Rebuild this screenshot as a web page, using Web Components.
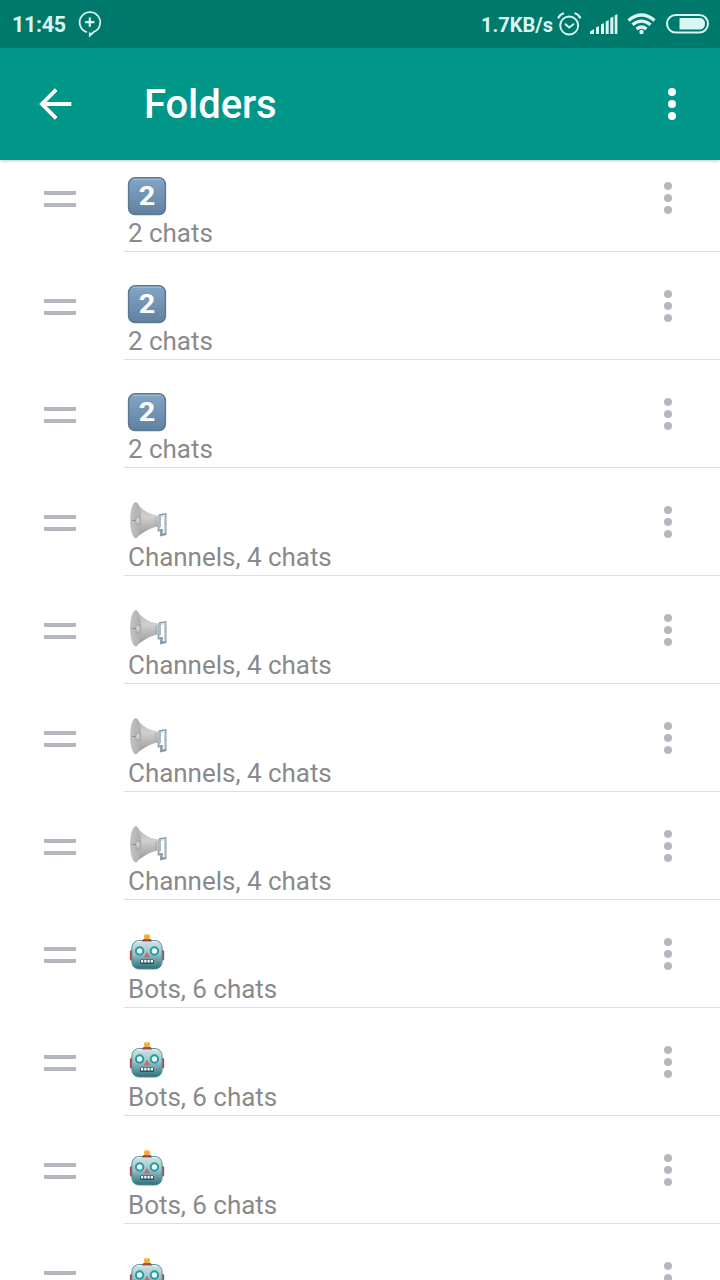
<!DOCTYPE html>
<html lang="en">
<head>
<meta charset="utf-8">
<title>Folders</title>
<style>
  body {
    margin: 0;
    width: 720px;
    height: 1280px;
    overflow: hidden;
    background: #fff;
    font-family: Roboto, "Noto Sans", sans-serif;
  }
</style>
</head>
<body>
<folders-screen></folders-screen>

<script>
// Emoji artwork, all on a 40x40 box
const EMOJI = {
  two: `
    <defs>
      <linearGradient id="key" x1="0" y1="0" x2="0" y2="1">
        <stop offset="0" stop-color="#84a6c6"/>
        <stop offset="1" stop-color="#6080a0"/>
      </linearGradient>
    </defs>
    <rect x="1.6" y="1.8" width="36.8" height="36.8" rx="6.5" fill="url(#key)" stroke="#5c7892" stroke-width="1.5"/>
    <path d="M6 3.300h28" stroke="#a5c0d8" stroke-width="1" stroke-linecap="round"/>
    <text x="20" y="29" text-anchor="middle" font-family="Roboto, sans-serif" font-size="25.5" font-weight="700" textLength="16.5" lengthAdjust="spacingAndGlyphs" fill="#fff">2</text>`,
  horn: `
    <defs>
      <linearGradient id="cone" x1="0" y1="0" x2="0" y2="1">
        <stop offset="0" stop-color="#b5b5b5"/>
        <stop offset=".4" stop-color="#d0d0d0"/>
        <stop offset="1" stop-color="#929292"/>
      </linearGradient>
      <linearGradient id="bell" x1="0" y1="0" x2="1" y2="0">
        <stop offset="0" stop-color="#c2c2c2"/>
        <stop offset="1" stop-color="#adadad"/>
      </linearGradient>
    </defs>
    <path d="M32 15.500l6.300-1v19.500l-4 1v-6" fill="none" stroke="#8799a6" stroke-width="2.400"/>
    <path d="M33 16l4.800-.8v18" fill="none" stroke="#d3e0ea" stroke-width="1.200"/>
    <path d="M8 2.500C14 7 19 14.500 32 15.500v11C22 27.500 16 33 8.500 38z" fill="url(#cone)"/>
    <ellipse cx="8.800" cy="20.200" rx="5.200" ry="17.800" fill="url(#bell)" stroke="#b2b2b2" stroke-width=".7"/>
    <path d="M5 20.500h8" stroke="#8c8c8c" stroke-width="1"/>
    <ellipse cx="11" cy="20.500" rx="2.400" ry="4" fill="#cecece" stroke="#949494" stroke-width=".8"/>
    <path d="M29 17v9.500" stroke="#a4a7a9" stroke-width="1"/>
    <path d="M31 15.500l3-.5v12l-3 1z" fill="#aebbc5"/>
    <path d="M31.500 26.500v4h4.500" fill="none" stroke="#8fa2af" stroke-width="1.800"/>`,
  robot: `
    <defs>
      <linearGradient id="face" x1="0" y1="0" x2="0" y2="1">
        <stop offset="0" stop-color="#d0e6e5"/>
        <stop offset=".45" stop-color="#9cc5c9"/>
        <stop offset="1" stop-color="#2b707c"/>
      </linearGradient>
    </defs>
    <rect x="2.800" y="18" width="4.500" height="10.500" rx="1.500" fill="#b04c58"/>
    <rect x="32.700" y="18" width="4.500" height="10.500" rx="1.500" fill="#b04c58"/>
    <rect x="4.900" y="8.500" width="30.200" height="28.500" rx="7" fill="url(#face)" stroke="#4d8890" stroke-width=".9"/>
    <path d="M10 9.700h20" stroke="#eef8f7" stroke-width="1"/>
    <path d="M15 9.600q0-3.200 5-3.200t5 3.200z" fill="#a04652"/>
    <rect x="17" y="1.900" width="6" height="5.400" rx="2.400" fill="#eeac2b"/>
    <path d="M18.800 3h2.400" stroke="#ffe186"/>
    <circle cx="12.600" cy="19" r="3.700" fill="#effcfc" stroke="#2699a5" stroke-width="2"/>
    <circle cx="27.400" cy="19" r="3.700" fill="#effcfc" stroke="#2699a5" stroke-width="2"/>
    <path d="M20 19.500l3.200 6h-6.400z" fill="#c56a77"/>
    <rect x="13" y="27.500" width="14" height="4.600" rx="1.500" fill="#245461"/>
    <path d="M14 29.300h12" stroke="#fff" stroke-width="2.400" stroke-dasharray="2.250 1"/>`
};

const FOLDERS = [
  ["two", "2 chats"],
  ["two", "2 chats"],
  ["two", "2 chats"],
  ["horn", "Channels, 4 chats"],
  ["horn", "Channels, 4 chats"],
  ["horn", "Channels, 4 chats"],
  ["horn", "Channels, 4 chats"],
  ["robot", "Bots, 6 chats"],
  ["robot", "Bots, 6 chats"],
  ["robot", "Bots, 6 chats"],
  ["robot", ""]
];

class FolderEmoji extends HTMLElement {
  connectedCallback() {
    this.attachShadow({ mode: "open" }).innerHTML = `
      <style>
        :host { display: block; width: 40px; height: 40px; }
        svg { display: block; }
      </style>
      <svg width="40" height="40" viewBox="0 0 40 40">${EMOJI[this.getAttribute("name")]}</svg>
    `;
  }
}
customElements.define("folder-emoji", FolderEmoji);

// Three vertical dots, coloured by the parent
class MoreDots extends HTMLElement {
  connectedCallback() {
    this.attachShadow({ mode: "open" }).innerHTML = `
      <style>
        :host { display: flex; flex-direction: column; gap: 4px; width: 8px; }
        i { height: 8px; border-radius: 50%; background: currentColor; }
      </style>
      <i></i><i></i><i></i>
    `;
  }
}
customElements.define("more-dots", MoreDots);

class StatusBar extends HTMLElement {
  connectedCallback() {
    this.attachShadow({ mode: "open" }).innerHTML = `
      <style>
        :host {
          display: flex;
          align-items: center;
          height: 48px;
          box-sizing: border-box;
          padding: 0 11px 0 12px;
          background: #00796d;
          color: #d9f6f2;
          font-size: 21.5px;
          font-weight: 700;
        }
        svg { display: block; flex: none; }
        span { padding-top: 1px; }
        .time { width: 65px; letter-spacing: -.35px; }
        .rate { margin-left: auto; font-size: 20px; width: 76px; white-space: nowrap; }
      </style>
      <span class="time">11:45</span>
      <svg width="26" height="28" viewBox="0 0 26 28" fill="none" stroke="#d9f6f2">
        <path d="M10 22.200A10.300 10.300 0 1 1 17 21.800L12.800 25.500V22.500" stroke-width="1.700"/>
        <path d="M12.800 7.500v9.200M8.200 12.100h9.200" stroke-width="2.200"/>
      </svg>
      <span class="rate">1.7KB/s</span>
      <svg width="152" height="28" viewBox="0 0 152 28" fill="none" stroke="#d9f6f2">
        <g stroke-width="1.900" stroke-linecap="round">
          <circle cx="12.200" cy="15.500" r="9"/>
          <path d="M8.500 14.200l3.700 3.300 4.200-3.300"/>
          <path d="M1.500 7.500q1.500-3 4.500-4M18.500 3.500q3 1 4.500 4" stroke-width="2.300"/>
        </g>
        <g fill="#d9f6f2" stroke="none">
          <path d="M33 24v-2.500l4-2.500v5zM39 17.500l3-1.500v8h-3zM44 14.500l3-1.500v11h-3zM48.700 11.500l3-1.500v14h-3zM53.300 8l3-1.500V24h-3zM57.700 5.500l2.700-1.500v20h-2.700z"/>
        </g>
        <g stroke-width="3.200">
          <path d="M71.500 10.500q13-11 26 0M75.500 14.800q9-7.500 18 0M79.500 19q5-4 10 0"/>
          <circle cx="84.500" cy="22" r="2.200" fill="#d9f6f2" stroke="none"/>
        </g>
        <rect x="110" y="5" width="41" height="17.500" rx="8.750" stroke-width="2"/>
        <path d="M122.500 8h19.500q6 0 6 5.750t-6 5.750h-19.500z" fill="#d9f6f2" stroke="none"/>
      </svg>
    `;
  }
}
customElements.define("status-bar", StatusBar);

class AppBar extends HTMLElement {
  connectedCallback() {
    this.attachShadow({ mode: "open" }).innerHTML = `
      <style>
        :host {
          display: flex;
          align-items: center;
          height: 112px;
          box-sizing: border-box;
          padding: 0 44px 0 36px;
          background: #009788;
          color: #fff;
          box-shadow: 0 1px 3px rgba(0, 0, 0, .22);
        }
        svg { display: block; margin-right: 68px; }
        h1 { margin: 0; padding-top: 1px; font-size: 40px; line-height: 48px; font-weight: 500; letter-spacing: -.1px; }
        more-dots { margin-left: auto; }
      </style>
      <svg width="40" height="40" viewBox="0 0 40 40" fill="none" stroke="#fff" stroke-width="3.800">
        <path d="M35.300 20H6.300M20.200 5.700L5.900 20l14.300 14.300"/>
      </svg>
      <h1><slot></slot></h1>
      <more-dots></more-dots>
    `;
  }
}
customElements.define("app-bar", AppBar);

class FolderRow extends HTMLElement {
  connectedCallback() {
    this.attachShadow({ mode: "open" }).innerHTML = `
      <style>
        :host { display: flex; height: 108px; box-sizing: border-box; padding-left: 44px; }
        .handle {
          width: 32px;
          height: 8px;
          margin: 47px 48px 0 0;
          border: solid #b4b8be;
          border-width: 4px 0;
        }
        .body {
          flex: 1;
          display: flex;
          justify-content: space-between;
          box-sizing: border-box;
          padding: 32px 48px 0 3px;
          border-bottom: 1px solid #dedede;
        }
        .text { color: #8a8a8a; font-size: 26px; line-height: 30px; letter-spacing: -.03px; }
        .text span { display: block; margin: 2px 0 0 1px; }
        more-dots { margin-top: 6px; color: #b4b8be; }
      </style>
      <div class="handle"></div>
      <div class="body">
        <div class="text">
          <folder-emoji name="${this.getAttribute("icon")}"></folder-emoji>
          <span><slot></slot></span>
        </div>
        <more-dots></more-dots>
      </div>
    `;
  }
}
customElements.define("folder-row", FolderRow);

class FoldersScreen extends HTMLElement {
  connectedCallback() {
    const rows = FOLDERS.map(([icon, text]) => `<folder-row icon="${icon}">${text}</folder-row>`).join("");
    this.attachShadow({ mode: "open" }).innerHTML = `
      <style>
        :host { display: flex; flex-direction: column; width: 720px; height: 1280px; overflow: hidden; }
        status-bar, app-bar { flex: none; }
        app-bar { z-index: 1; }
        /* list is scrolled slightly under the bar */
        .list { flex: 1; min-height: 0; margin-top: -16px; overflow: hidden; }
      </style>
      <status-bar></status-bar>
      <app-bar>Folders</app-bar>
      <div class="list">${rows}</div>
    `;
  }
}
customElements.define("folders-screen", FoldersScreen);
</script>
</body>
</html>
